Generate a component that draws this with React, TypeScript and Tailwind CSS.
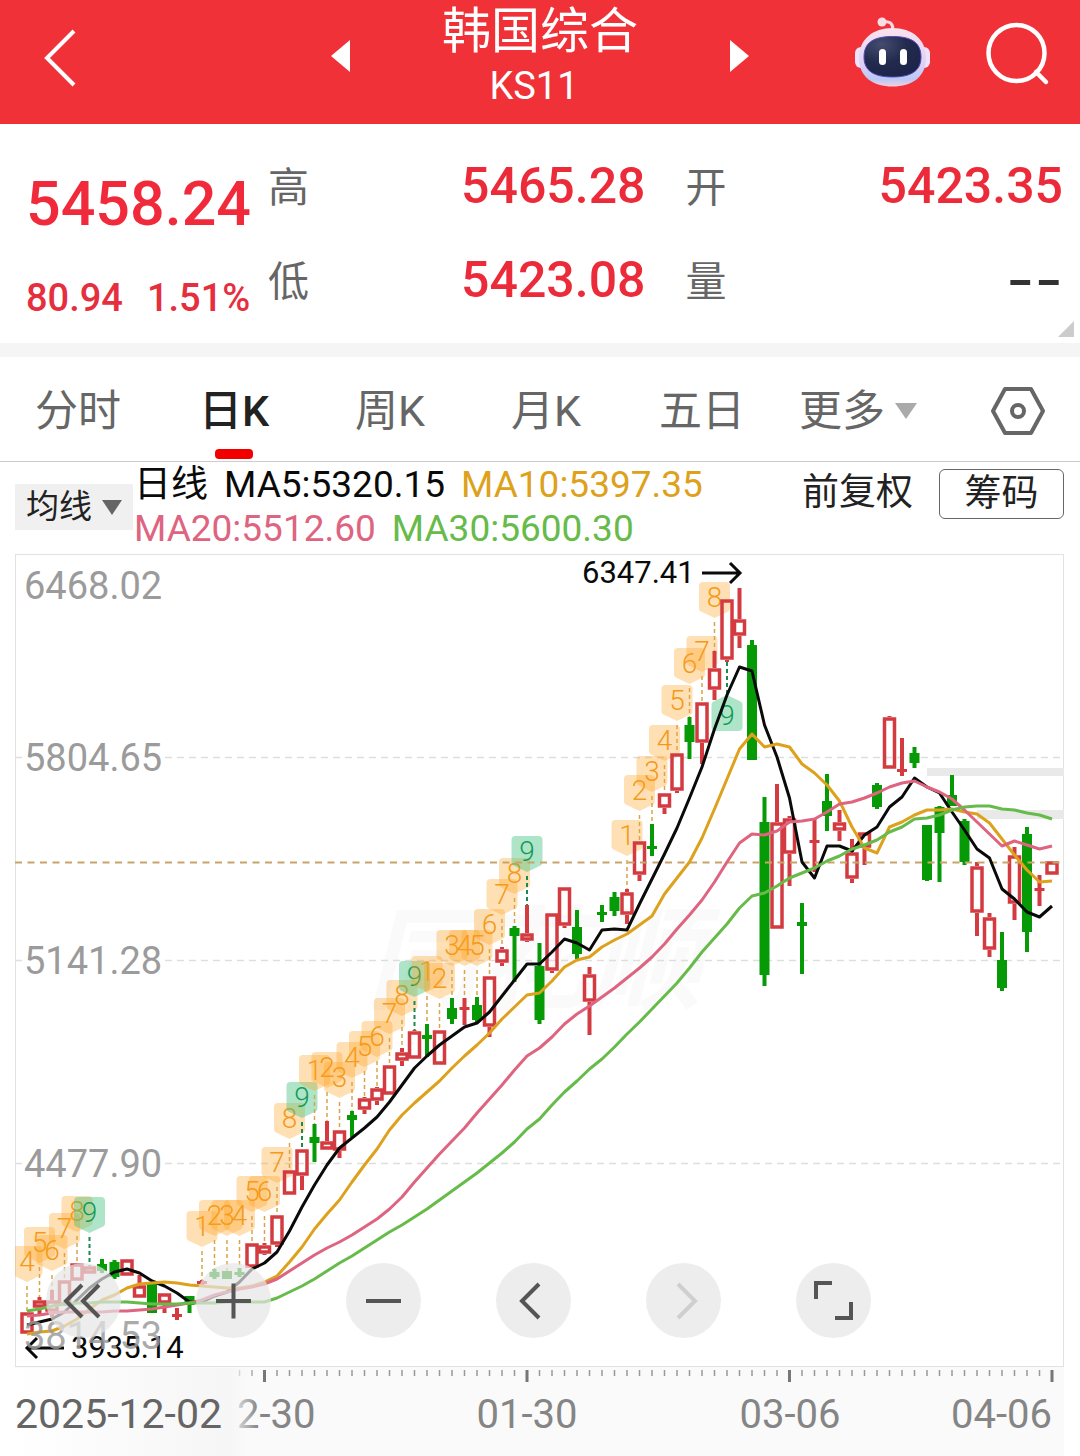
import { useState } from 'react';

type Candle = ['r' | 'g', number, number, number, number]; // colour, high, body top, body bottom, low

const STEP = 12.5;
const FIRST_X = 27;
const barX = (i: number) => FIRST_X + i * STEP;

const candles: Candle[] = [
  ['r', 1312, 1312, 1334, 1334], ['r', 1297, 1300, 1308, 1315], ['r', 1290, 1300, 1312, 1317], ['r', 1280, 1280, 1306, 1306],
  ['r', 1263, 1263, 1281, 1281], ['r', 1266, 1266, 1274, 1274], ['g', 1259, 1264, 1271, 1273], ['g', 1260, 1262, 1277, 1279],
  ['r', 1259, 1259, 1276, 1276], ['r', 1275, 1285, 1298, 1298], ['g', 1284, 1284, 1313, 1313], ['r', 1293, 1293, 1304, 1313],
  ['r', 1308, 1314, 1317, 1320], ['g', 1296, 1296, 1305, 1313], ['r', 1280, 1281, 1284, 1285], ['g', 1269, 1272, 1277, 1279],
  ['g', 1271, 1271, 1279, 1279], ['g', 1268, 1272, 1275, 1277], ['r', 1243, 1243, 1268, 1268], ['r', 1243, 1245, 1254, 1255],
  ['r', 1215, 1215, 1245, 1247], ['r', 1170, 1170, 1195, 1195], ['r', 1149, 1149, 1176, 1190], ['g', 1124, 1137, 1143, 1162],
  ['r', 1121, 1141, 1150, 1150], ['r', 1130, 1130, 1151, 1158], ['g', 1111, 1115, 1120, 1137], ['r', 1097, 1098, 1110, 1114],
  ['r', 1087, 1088, 1101, 1105], ['r', 1065, 1065, 1095, 1095], ['r', 1048, 1052, 1061, 1066], ['r', 1030, 1031, 1059, 1059],
  ['g', 1024, 1035, 1039, 1057], ['r', 1030, 1030, 1065, 1065], ['g', 998, 1008, 1019, 1024], ['r', 998, 1007, 1010, 1025],
  ['g', 997, 1005, 1020, 1022], ['r', 976, 976, 1027, 1037], ['r', 947, 949, 963, 966], ['g', 926, 928, 936, 982],
  ['r', 905, 933, 941, 942], ['g', 943, 966, 1020, 1024], ['r', 913, 913, 971, 973], ['r', 887, 887, 926, 928],
  ['g', 910, 927, 954, 959], ['r', 967, 974, 1002, 1035], ['g', 905, 912, 915, 922], ['g', 892, 897, 911, 916],
  ['r', 889, 892, 915, 924], ['r', 841, 841, 875, 881], ['g', 824, 846, 849, 856], ['r', 793, 793, 808, 814],
  ['r', 753, 753, 791, 793], ['g', 717, 725, 742, 759], ['r', 702, 702, 743, 764], ['r', 651, 668, 690, 700],
  ['r', 599, 599, 660, 662], ['r', 588, 619, 636, 648], ['g', 640, 645, 760, 760], ['g', 797, 822, 975, 986],
  ['r', 784, 822, 929, 929], ['r', 816, 818, 854, 886], ['g', 903, 922, 926, 974], ['r', 818, 840, 843, 872],
  ['g', 774, 801, 816, 831], ['r', 810, 822, 831, 841], ['r', 839, 852, 879, 883], ['r', 832, 832, 848, 865],
  ['g', 783, 785, 807, 809], ['r', 716, 717, 769, 769], ['r', 738, 769, 772, 776], ['g', 747, 753, 763, 768],
  ['g', 825, 825, 880, 881], ['g', 806, 807, 833, 882], ['g', 775, 795, 806, 806], ['g', 819, 821, 862, 865],
  ['r', 862, 866, 913, 936], ['r', 913, 917, 950, 957], ['g', 932, 960, 988, 991], ['r', 847, 855, 904, 920],
  ['g', 827, 834, 932, 952], ['r', 875, 888, 891, 906], ['r', 861, 861, 875, 875],
];

const ma5 = [
  1325, 1322, 1319, 1312, 1300, 1288, 1279, 1272, 1269, 1273, 1281, 1286, 1293, 1302, 1302, 1296, 1292, 1282, 1269, 1263,
  1252, 1231, 1207, 1185, 1165, 1148, 1138, 1128, 1117, 1102, 1085, 1068, 1056, 1045, 1036, 1027, 1023, 1012, 996, 980,
  964, 964, 952, 939, 943, 950, 930, 929, 930, 904, 879, 854, 828, 798, 767, 729, 695, 667, 671, 725,
  757, 798, 862, 878, 846, 846, 851, 835, 827, 807, 797, 778, 787, 793, 812, 830, 849, 858, 889, 899,
  912, 917, 906,
];

const ma10 = [
  1334, 1332, 1331, 1326, 1319, 1309, 1300, 1295, 1288, 1284, 1283, 1282, 1283, 1285, 1286, 1287, 1288, 1288, 1286, 1282,
  1276, 1262, 1247, 1229, 1214, 1200, 1182, 1165, 1149, 1130, 1115, 1103, 1092, 1081, 1068, 1056, 1045, 1033, 1019, 1007,
  995, 993, 981, 967, 960, 957, 947, 940, 934, 925, 916, 894, 878, 862, 838, 809, 779, 749, 734, 747,
  744, 747, 764, 773, 785, 801, 827, 848, 853, 827, 822, 815, 810, 810, 809, 812, 814, 823, 839, 855,
  870, 882, 881,
];

const ma20 = [
  1316, 1315, 1313, 1312, 1312, 1312, 1312, 1311, 1311, 1310, 1309, 1307, 1305, 1303, 1300, 1295, 1292, 1289, 1287, 1284,
  1279, 1271, 1263, 1255, 1248, 1242, 1235, 1227, 1219, 1209, 1197, 1182, 1168, 1154, 1141, 1128, 1113, 1099, 1085, 1070,
  1056, 1048, 1037, 1024, 1014, 1006, 997, 988, 978, 968, 957, 944, 929, 915, 900, 882, 862, 843, 834, 835,
  831, 822, 821, 819, 812, 804, 802, 798, 793, 787, 783, 781, 787, 792, 799, 810, 822, 834, 846, 841,
  845, 849, 846,
];

const ma30 = [
  1311, 1309, 1306, 1304, 1303, 1303, 1302, 1302, 1302, 1303, 1304, 1304, 1304, 1303, 1303, 1303, 1302, 1302, 1302, 1302,
  1298, 1292, 1286, 1279, 1271, 1263, 1256, 1248, 1240, 1232, 1225, 1217, 1209, 1200, 1191, 1182, 1173, 1163, 1153, 1142,
  1129, 1119, 1105, 1092, 1081, 1069, 1059, 1047, 1034, 1022, 1009, 996, 983, 968, 952, 938, 924, 908, 896, 893,
  886, 878, 873, 868, 861, 856, 849, 845, 840, 832, 827, 819, 818, 815, 810, 807, 806, 806, 809, 810,
  813, 815, 819,
];

const averages = [
  { points: ma5, color: '#0a0a0a' },
  { points: ma10, color: '#dda11c' },
  { points: ma20, color: '#de6480' },
  { points: ma30, color: '#66bb4a' },
];

// bar index, count, top of the badge
const counts: [number, number, number][] = [
  [0, 4, 1246], [1, 5, 1227], [2, 6, 1235], [3, 7, 1213], [4, 8, 1196], [5, 9, 1197],
  [14, 1, 1211], [15, 2, 1200], [16, 3, 1200], [17, 4, 1200], [18, 5, 1176], [19, 6, 1176], [20, 7, 1147], [21, 8, 1103], [22, 9, 1082],
  [23, 1, 1055], [24, 2, 1052], [25, 3, 1062], [26, 4, 1042], [27, 5, 1031], [28, 6, 1021], [29, 7, 998], [30, 8, 980], [31, 9, 961],
  [32, 1, 956], [33, 2, 963], [34, 3, 930], [35, 4, 930], [36, 5, 930], [37, 6, 909], [38, 7, 879], [39, 8, 858], [40, 9, 836],
  [48, 1, 820], [49, 2, 775], [50, 3, 756], [51, 4, 725], [52, 5, 685], [53, 6, 648], [54, 7, 636], [55, 8, 582],
];

const axisLabels: [string, number][] = [
  ['6468.02', 599],
  ['5804.65', 771],
  ['5141.28', 974],
  ['4477.90', 1177],
  ['3814.53', 1349],
];

const tabs = ['分时', '日K', '周K', '月K', '五日'];

function CountBadge({ index, count, top }: { index: number; count: number; top: number }) {
  const x = barX(index);
  const nine = count === 9;
  return (
    <g>
      <line
        x1={x}
        x2={x}
        y1={top + 40}
        y2={candles[index][1]}
        stroke={nine ? '#1c8a50' : '#d9a548'}
        strokeWidth={nine ? 2 : 1.5}
        strokeDasharray="4 3"
      />
      <path
        d={`M${x - 11.5} ${top}h23q4 0 4 4v22q0 3 -3 4l-12.5 6l-12.5 -6q-3 -1 -3 -4v-22q0 -4 4 -4z`}
        fill={nine ? '#3dc17c' : '#ffa01e'}
        fillOpacity={nine ? 0.42 : 0.33}
      />
      <text x={x} y={top + 25} textAnchor="middle" fontSize="28" fontWeight="300" fill={nine ? '#149a58' : '#f39a18'}>
        {count}
      </text>
    </g>
  );
}

function CandleShape({ candle, x }: { candle: Candle; x: number }) {
  const [kind, high, top, bottom, low] = candle;
  if (kind === 'g') {
    return (
      <g fill="#079a07">
        <rect x={x - 2} y={high} width="4" height={low - high} />
        <rect x={x - 5} y={top} width="10" height={bottom - top} />
      </g>
    );
  }
  if (bottom - top < 4) {
    return (
      <g fill="#d43b41">
        <rect x={x - 2} y={high} width="4" height={low - high} />
        <rect x={x - 5} y={top} width="10" height="3" />
      </g>
    );
  }
  return (
    <g fill="#d43b41">
      <rect x={x - 2} y={high} width="4" height={top - high} />
      <rect x={x - 2} y={bottom} width="4" height={low - bottom} />
      <rect x={x - 5} y={top + 2} width="10" height={bottom - top - 4} fill="none" stroke="#d43b41" strokeWidth="3.5" />
    </g>
  );
}

function KLineChart() {
  const ticks = candles.map((_, i) => i).filter((i) => i >= 17);
  return (
    <svg viewBox="0 554 1080 902" className="block h-auto w-full" role="img" aria-label="日K">
      <defs>
        <clipPath id="plot">
          <rect x="15" y="554" width="1049" height="813" />
        </clipPath>
        <linearGradient id="dateFade" x1="0" x2="1" y1="0" y2="0">
          <stop offset="0" stopColor="#ffffff" />
          <stop offset="0.88" stopColor="#f6f6f6" />
          <stop offset="1" stopColor="#fafafa" stopOpacity="0" />
        </linearGradient>
      </defs>

      <rect x="15" y="1367" width="1049" height="89" fill="#fafafa" />
      <rect x="15.5" y="554.5" width="1048" height="812" fill="#fff" stroke="#e2e2e2" />

      <text x="366" y="1000" fontSize="112" fontWeight="700" fontStyle="italic" fill="#fafafa">
        同花顺
      </text>

      <g stroke="#dedede" strokeWidth="1.5" strokeDasharray="7 5">
        <line x1="165" x2="1060" y1="757.5" y2="757.5" />
        <line x1="165" x2="1060" y1="960.5" y2="960.5" />
        <line x1="165" x2="1060" y1="1163.5" y2="1163.5" />
        <line x1="15" x2="25" y1="757.5" y2="757.5" />
        <line x1="15" x2="25" y1="960.5" y2="960.5" />
        <line x1="15" x2="25" y1="1163.5" y2="1163.5" />
      </g>
      <rect x="927" y="768" width="137" height="8" fill="#e9e9e9" />
      <rect x="977" y="810" width="87" height="9" fill="#e9e9e9" />

      <g clipPath="url(#plot)">
        {counts.map(([index, count, top]) => (
          <CountBadge key={index} index={index} count={count} top={top} />
        ))}
      </g>
      {candles.map((candle, i) => (
        <CandleShape key={i} candle={candle} x={barX(i)} />
      ))}

      {/* the last 9 hangs below its candle */}
      <line x1="727" x2="727" y1="662" y2="694" stroke="#1c8a50" strokeWidth="2" strokeDasharray="4 3" />
      <path d="M715.5 731h23q4 0 4 -4v-22q0 -3 -3 -4l-12.5 -6l-12.5 6q-3 1 -3 4v22q0 4 4 4z" fill="#3dc17c" fillOpacity="0.42" />
      <text x="727" y="725" textAnchor="middle" fontSize="28" fontWeight="300" fill="#149a58">
        9
      </text>

      <line x1="15" x2="1064" y1="862.5" y2="862.5" stroke="#c9a46a" strokeWidth="2" strokeDasharray="7 5.5" />

      {averages.map(({ points, color }) => (
        <polyline
          key={color}
          points={points.map((y, i) => `${barX(i)},${y}`).join(' ')}
          fill="none"
          stroke={color}
          strokeWidth="3"
          strokeLinejoin="round"
        />
      ))}

      <g fontSize="31" fill="#0a0a0a">
        <text x="582" y="583">6347.41</text>
        <text x="71" y="1358">3935.14</text>
      </g>
      <g fill="none" stroke="#0a0a0a" strokeWidth="3">
        <path d="M702 573h37M730 563l10 10l-10 10" />
        <path d="M64 1348h-36M37 1338l-10 10l10 10" />
      </g>

      <g fontSize="38" fill="#9b9b9b">
        {axisLabels.map(([label, y]) => (
          <text key={label} x="24" y={y} fillOpacity={y > 1300 ? 0.85 : 1}>
            {label}
          </text>
        ))}
      </g>

      {ticks.map((i) => {
        const major = (i + 2) % 21 === 0;
        return (
          <rect
            key={i}
            x={barX(i) - (major ? 1.5 : 0.75)}
            y="1370"
            width={major ? 3 : 1.5}
            height={major ? 12 : 6}
            fill={major ? '#777' : '#999'}
          />
        );
      })}
      <g fontSize="40" fill="#858585" textAnchor="middle">
        <text x="265" y="1428">12-30</text>
        <text x="527" y="1428">01-30</text>
        <text x="790" y="1428">03-06</text>
        <text x="1052" y="1428" textAnchor="end">
          04-06
        </text>
      </g>
      <rect x="15" y="1368" width="243" height="88" fill="url(#dateFade)" />
      <text x="15" y="1428" fontSize="41" fill="#656565">
        2025-12-02
      </text>
    </svg>
  );
}

function RoundButton({ label, path, disabled }: { label: string; path: string; disabled?: boolean }) {
  return (
    <button
      type="button"
      aria-label={label}
      disabled={disabled}
      className="size-[75px] rounded-full bg-[#e5e5e5]/70 text-[#555] disabled:text-[#cfcfcf]"
    >
      <svg viewBox="0 0 75 75" className="size-full" fill="none" stroke="currentColor" strokeWidth="4">
        <path d={path} />
      </svg>
    </button>
  );
}

function Header() {
  return (
    <header className="grid h-[124px] grid-cols-[1fr_auto_1fr] items-start bg-[#f03138] text-white">
      <button type="button" aria-label="返回" className="ml-11 mt-7 w-8">
        <svg viewBox="0 0 32 60" className="w-8" fill="none" stroke="currentColor" strokeWidth="4">
          <path d="M30 3L3 30L30 57" />
        </svg>
      </button>

      <div className="flex w-[418px] justify-between">
        <button type="button" aria-label="上一个" className="mt-10 h-8">
          <svg viewBox="0 0 19 32" className="h-8" fill="currentColor">
            <path d="M19 0V32L0 16Z" />
          </svg>
        </button>
        <div className="text-center">
          <h1 className="text-[49px] leading-[64px]">韩国综合</h1>
          <p className="pr-3 text-[38px] leading-[44px]">KS11</p>
        </div>
        <button type="button" aria-label="下一个" className="mt-10 h-8">
          <svg viewBox="0 0 19 32" className="h-8" fill="currentColor">
            <path d="M0 0V32L19 16Z" />
          </svg>
        </button>
      </div>

      <div className="flex justify-end gap-14 pr-[30px] pt-4">
        <button type="button" aria-label="智能助手">
          <svg viewBox="0 0 75 72" className="h-[72px]">
            <defs>
              <linearGradient id="shell" x1="0" x2="0" y1="0" y2="1">
                <stop offset="0" stopColor="#fbe3ee" />
                <stop offset="0.6" stopColor="#ddd2f5" />
                <stop offset="0.88" stopColor="#b9c8f6" />
                <stop offset="1" stopColor="#f6cfdc" />
              </linearGradient>
              <radialGradient id="visor" cx="0.3" cy="0.2" r="0.9">
                <stop offset="0" stopColor="#444d70" />
                <stop offset="0.5" stopColor="#222b4d" />
                <stop offset="1" stopColor="#1b2349" />
              </radialGradient>
            </defs>
            <path d="M28 6q10 -2 10 8" fill="none" stroke="#fad9e5" strokeWidth="3" />
            <circle cx="27" cy="6" r="4.5" fill="#fbdde8" />
            <rect x="0" y="31" width="12" height="21" rx="6" fill="#efe2fa" />
            <rect x="63" y="31" width="12" height="21" rx="6" fill="#efe2fa" />
            <path d="M37.5 12C57 12 71 23 71 42C71 61 57 70.500 37.5 70.500C18 70.500 4 61 4 42C4 23 18 12 37.5 12Z" fill="url(#shell)" />
            <path
              d="M37.5 20.500C57 20.500 66 27 66 41C66 55 56 61 37.5 61C19 61 9 55 9 41C9 27 18 20.500 37.5 20.500Z"
              fill="url(#visor)"
              stroke="#5a48b8"
              strokeWidth="1"
            />
            <rect x="24" y="33" width="7" height="16" rx="3.5" fill="#fff" />
            <rect x="45" y="33" width="7" height="16" rx="3.5" fill="#fff" />
          </svg>
        </button>
        <button type="button" aria-label="搜索">
          <svg viewBox="0 0 64 72" className="h-[72px]" fill="none" stroke="currentColor" strokeWidth="4.5">
            <circle cx="30.5" cy="37" r="28" />
            <path d="M50 56L60 66" strokeLinecap="round" />
          </svg>
        </button>
      </div>
    </header>
  );
}

function QuoteRow({ label, value }: { label: string; value: string }) {
  return (
    <div className="flex items-center justify-between">
      <dt className="pt-1 text-[41px] leading-[56px] text-[#666]">{label}</dt>
      {value === '--' ? (
        <dd className="font-[Inter,sans-serif] text-[62px] leading-[60px] text-[#333]">{value}</dd>
      ) : (
        <dd className="text-[50px] font-medium leading-[60px] text-[#ec2b3a]">{value}</dd>
      )}
    </div>
  );
}

function Quote() {
  return (
    <section className="relative flex h-[219px] pl-[26px] pr-[17px]">
      <div className="w-[242px] shrink-0 text-[#f02a3a]">
        <p className="mt-11 text-[61px] font-medium leading-[72px]">5458.24</p>
        <p className="mt-9 flex gap-6 text-[38px] font-medium leading-[44px] text-[#e62f3e]">
          <span>80.94</span>
          <span>1.51%</span>
        </p>
      </div>
      <dl className="flex flex-1 flex-col gap-[34px] pt-8">
        <QuoteRow label="高" value="5465.28" />
        <QuoteRow label="低" value="5423.08" />
      </dl>
      <dl className="ml-10 flex flex-1 flex-col gap-[34px] pt-8">
        <QuoteRow label="开" value="5423.35" />
        <QuoteRow label="量" value="--" />
      </dl>
      <svg viewBox="0 0 16 16" className="absolute bottom-1.5 right-1.5 size-4 fill-[#ccc]">
        <path d="M16 0V16H0Z" />
      </svg>
    </section>
  );
}

export default function App() {
  const [active, setActive] = useState('日K');

  return (
    <main className="w-full bg-white font-[Roboto,'Noto_Sans_CJK_SC',sans-serif]">
      <Header />
      <Quote />
      <div className="h-3.5 bg-[#f5f5f5]" />

      <nav className="grid h-[105px] grid-cols-[repeat(6,13fr)_12fr] border-b border-[#ccc] text-[43px] text-[#666]">
        {tabs.map((tab) => (
          <button
            key={tab}
            type="button"
            onClick={() => setActive(tab)}
            className={tab === active ? 'relative pt-1 font-medium text-[#222]' : 'relative pt-1'}
          >
            {tab}
            {tab === active && <span className="absolute bottom-0.5 left-1/2 h-2.5 w-[38px] -translate-x-1/2 rounded bg-[#f20000]" />}
          </button>
        ))}
        <button type="button" className="flex items-center justify-center gap-2.5 pt-1">
          更多
          <svg viewBox="0 0 22 16" className="w-[22px] fill-[#aaa]">
            <path d="M0 0H22L11 16Z" />
          </svg>
        </button>
        <button type="button" aria-label="设置" className="flex items-center justify-end pr-[34px] pt-1">
          <svg viewBox="0 0 56 48" className="w-14" fill="none" stroke="#666" strokeWidth="4" strokeLinejoin="round">
            <path d="M15 2H41L53 24L41 46H15L3 24Z" />
            <circle cx="28" cy="24" r="6" />
          </svg>
        </button>
      </nav>

      <div className="flex h-[92px] items-start pl-[15px] pr-4">
        <button type="button" className="mt-[22px] flex h-[46px] w-[118px] shrink-0 items-center justify-center gap-2.5 bg-[#f0f0f0] text-[33px] text-[#222]">
          均线
          <svg viewBox="0 0 20 15" className="w-5 fill-[#666]">
            <path d="M0 0H20L10 15Z" />
          </svg>
        </button>
        <div className="flex-1 pl-px pt-px text-[37px] leading-[44px] whitespace-nowrap">
          <p className="flex gap-4 text-[#0a0a0a]">
            <span>日线</span>
            <span>MA5:5320.15</span>
            <span className="text-[#dda11c]">MA10:5397.35</span>
          </p>
          <p className="flex gap-4 text-[#de6480]">
            <span>MA20:5512.60</span>
            <span className="text-[#66bb4a]">MA30:5600.30</span>
          </p>
        </div>
        <button type="button" className="mt-1 text-[37px] leading-[54px] text-[#222]">
          前复权
        </button>
        <button type="button" className="ml-[26px] mt-[7px] h-[50px] w-[125px] rounded-md border border-[#666] text-[37px] leading-[48px] text-[#222]">
          筹码
        </button>
      </div>

      <section className="relative">
        <KLineChart />
        <div className="absolute bottom-[118px] left-[46px] flex gap-[75px]">
          <RoundButton label="最早" path="M36 22L20 38L36 54M53 22L37 38L53 54" />
          <RoundButton label="放大" path="M20 38H55M37.5 20.5V55.5" />
          <RoundButton label="缩小" path="M20 38H55" />
          <RoundButton label="向左" path="M43 21L26 38L43 55" />
          <RoundButton label="向右" path="M32 21L49 38L32 55" disabled />
          <RoundButton label="全屏" path="M20 36V20H36M55 39V55H39" />
        </div>
      </section>
    </main>
  );
}
